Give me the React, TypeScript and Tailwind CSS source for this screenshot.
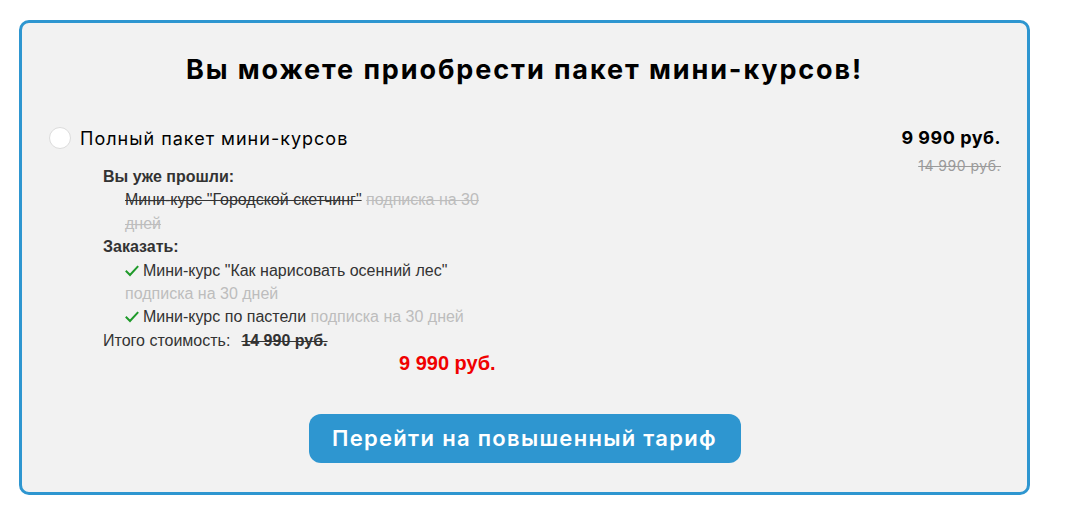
import React from 'react';

const head = { fontFamily: 'Inter, "Noto Sans", sans-serif' };
const body = { fontFamily: '"Liberation Sans", Arial, sans-serif' };

function Check() {
  return (
    <svg className="inline-block w-[14px] h-[12px] mr-[4px] align-[-1px]" viewBox="0 0 14 12" fill="none">
      <path d="M1.5 6.5 L5 10 L12.5 1.8" stroke="#1f9a2a" strokeWidth="2" strokeLinecap="square" />
    </svg>
  );
}

export default function App() {
  return (
    <div className="w-[1065px] h-[525px] bg-white pt-[20px] pl-[19px]" style={body}>
      <div className="w-[1011px] h-[475px] border-[3px] border-[#2e96d0] rounded-[10px] bg-[#f2f2f2] pt-[29px] px-[26px]">
        <h1 className="text-center text-[27px] leading-[36px] font-bold text-black tracking-[1.9px]" style={head}>
          Вы можете приобрести пакет мини-курсов!
        </h1>

        <div className="flex justify-between mt-[38px]">
          <div>
            <div className="flex items-center h-[24px]">
              <span className="w-[22px] h-[22px] rounded-full bg-white border border-[#dcdcdc] ml-[1px]" />
              <span className="ml-[9px] text-[18px] tracking-[1px] text-black" style={head}>
                Полный пакет мини-курсов
              </span>
            </div>

            <div className="ml-[55px] mt-[15px] text-[16px] leading-[23.4px] text-[#333]">
              <div className="font-bold">Вы уже прошли:</div>
              <div className="pl-[22px] w-[384px]">
                <span className="line-through">Мини-курс "Городской скетчинг"</span>{' '}
                <span className="line-through text-[#bdbdbd]">подписка на 30 дней</span>
              </div>
              <div className="font-bold">Заказать:</div>
              <div className="pl-[22px] w-[384px]">
                <div>
                  <Check />
                  Мини-курс "Как нарисовать осенний лес"{' '}
                  <span className="text-[#bdbdbd]">подписка на 30 дней</span>
                </div>
                <div>
                  <Check />
                  Мини-курс по пастели{' '}
                  <span className="text-[#bdbdbd]">подписка на 30 дней</span>
                </div>
              </div>
              <div>
                <span>Итого стоимость:</span>
                <span className="ml-[11px] font-bold line-through">14 990 руб.</span>
              </div>
              <div className="ml-[296px] text-[20px] font-bold text-[#f00000]">9 990 руб.</div>
            </div>
          </div>

          <div className="text-right" style={head}>
            <div className="text-[18px] leading-[24px] font-bold tracking-[0.5px] text-black">9 990 руб.</div>
            <div className="text-[14px] leading-[24px] tracking-[0.5px] text-[#9a9a9a] line-through mt-[4px]">14 990 руб.</div>
          </div>
        </div>

        <div className="flex justify-center mt-[38px]">
          <button className="w-[432px] h-[49px] rounded-[12px] bg-[#2e96d0] text-white text-[22px] tracking-[1.3px] font-semibold" style={head}>
            Перейти на повышенный тариф
          </button>
        </div>
      </div>
    </div>
  );
}
